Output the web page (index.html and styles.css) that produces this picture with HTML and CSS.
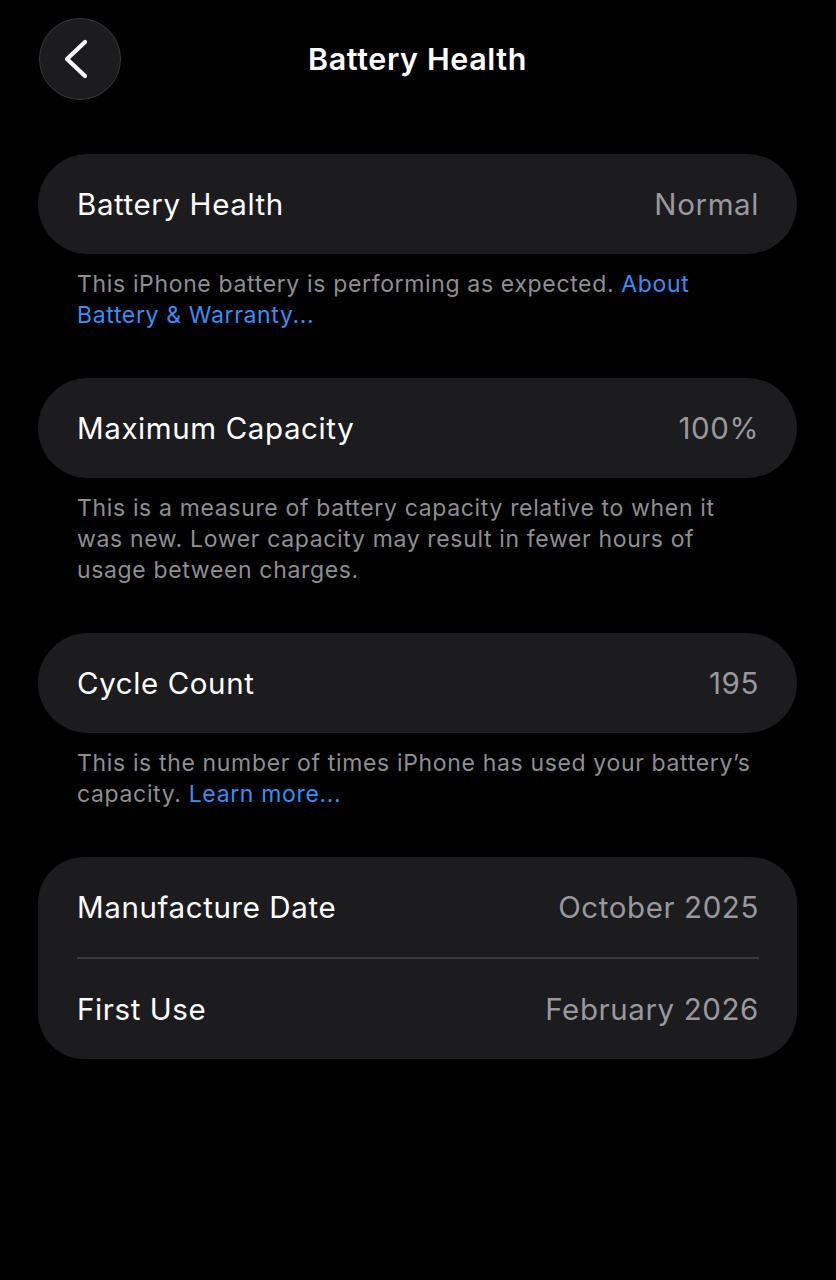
FILE: index.html
```html
<!DOCTYPE html>
<html lang="en">
<head>
<meta charset="utf-8">
<title>Battery Health</title>
<link rel="stylesheet" href="styles.css">
</head>
<body>
<div class="screen">
  <header class="nav">
    <button class="back" aria-label="Back">
      <svg width="40" height="40" viewBox="0 0 40 40" fill="none">
        <path d="M27 3 L9 20 L27 37" stroke="#fff" stroke-width="4.2" stroke-linecap="round" stroke-linejoin="round"/>
      </svg>
    </button>
    <h1 class="title">Battery Health</h1>
  </header>

  <section class="group">
    <div class="card">
      <div class="row"><span class="label">Battery Health</span><span class="value">Normal</span></div>
    </div>
    <p class="note">This iPhone battery is performing as expected. <span class="link">About Battery &amp; Warranty...</span></p>
  </section>

  <section class="group">
    <div class="card">
      <div class="row"><span class="label">Maximum Capacity</span><span class="value">100%</span></div>
    </div>
    <p class="note">This is a measure of battery capacity relative to when it was new. Lower capacity may result in fewer hours of usage between charges.</p>
  </section>

  <section class="group">
    <div class="card">
      <div class="row"><span class="label">Cycle Count</span><span class="value">195</span></div>
    </div>
    <p class="note">This is the number of times iPhone has used your battery’s capacity. <span class="link">Learn more...</span></p>
  </section>

  <section class="group">
    <div class="card card-multi">
      <div class="row"><span class="label">Manufacture Date</span><span class="value">October 2025</span></div>
      <div class="sep"></div>
      <div class="row"><span class="label">First Use</span><span class="value">February 2026</span></div>
    </div>
  </section>
</div>
</body>
</html>
```

FILE: styles.css
```css
* { box-sizing: border-box; }
html, body {
  margin: 0;
  padding: 0;
  background: #000;
}
body {
  font-family: Inter, "Open Sans", "Liberation Sans", sans-serif;
  color: #fff;
  width: 836px;
  min-height: 1280px;
}
.screen {
  padding: 18px 39px 0 38px;
}
.nav {
  position: relative;
  height: 82px;
  display: flex;
  align-items: center;
  justify-content: center;
  margin-bottom: 54px;
}
.back {
  position: absolute;
  left: 1px;
  top: 0;
  width: 82px;
  height: 82px;
  border-radius: 50%;
  background: #1c1c1e;
  border: 1.5px solid #38383b;
  display: flex;
  align-items: center;
  justify-content: center;
  padding: 0 4px 0 0;
}
.title {
  margin: 0;
  font-size: 30.5px;
  font-weight: 600;
  letter-spacing: 0.6px;
  line-height: 1;
}
.group {
  margin-bottom: 47px;
}
.card {
  background: #1c1c1e;
  border-radius: 50px;
  padding: 0 38px 0 39px;
}
.card-multi {
  border-radius: 46px;
}
.row {
  height: 100px;
  display: flex;
  align-items: center;
  justify-content: space-between;
  font-size: 29.5px;
  letter-spacing: 0.6px;
}
.label { color: #fff; }
.value { color: #98989e; }
.sep {
  height: 1.5px;
  background: #3a3a3c;
}
.note {
  margin: 15px 0 0 0;
  padding: 0 39px;
  font-size: 23px;
  line-height: 31px;
  color: #8e8e93;
  letter-spacing: 0.65px;
}
.link { color: #3a8ef6; }
```
